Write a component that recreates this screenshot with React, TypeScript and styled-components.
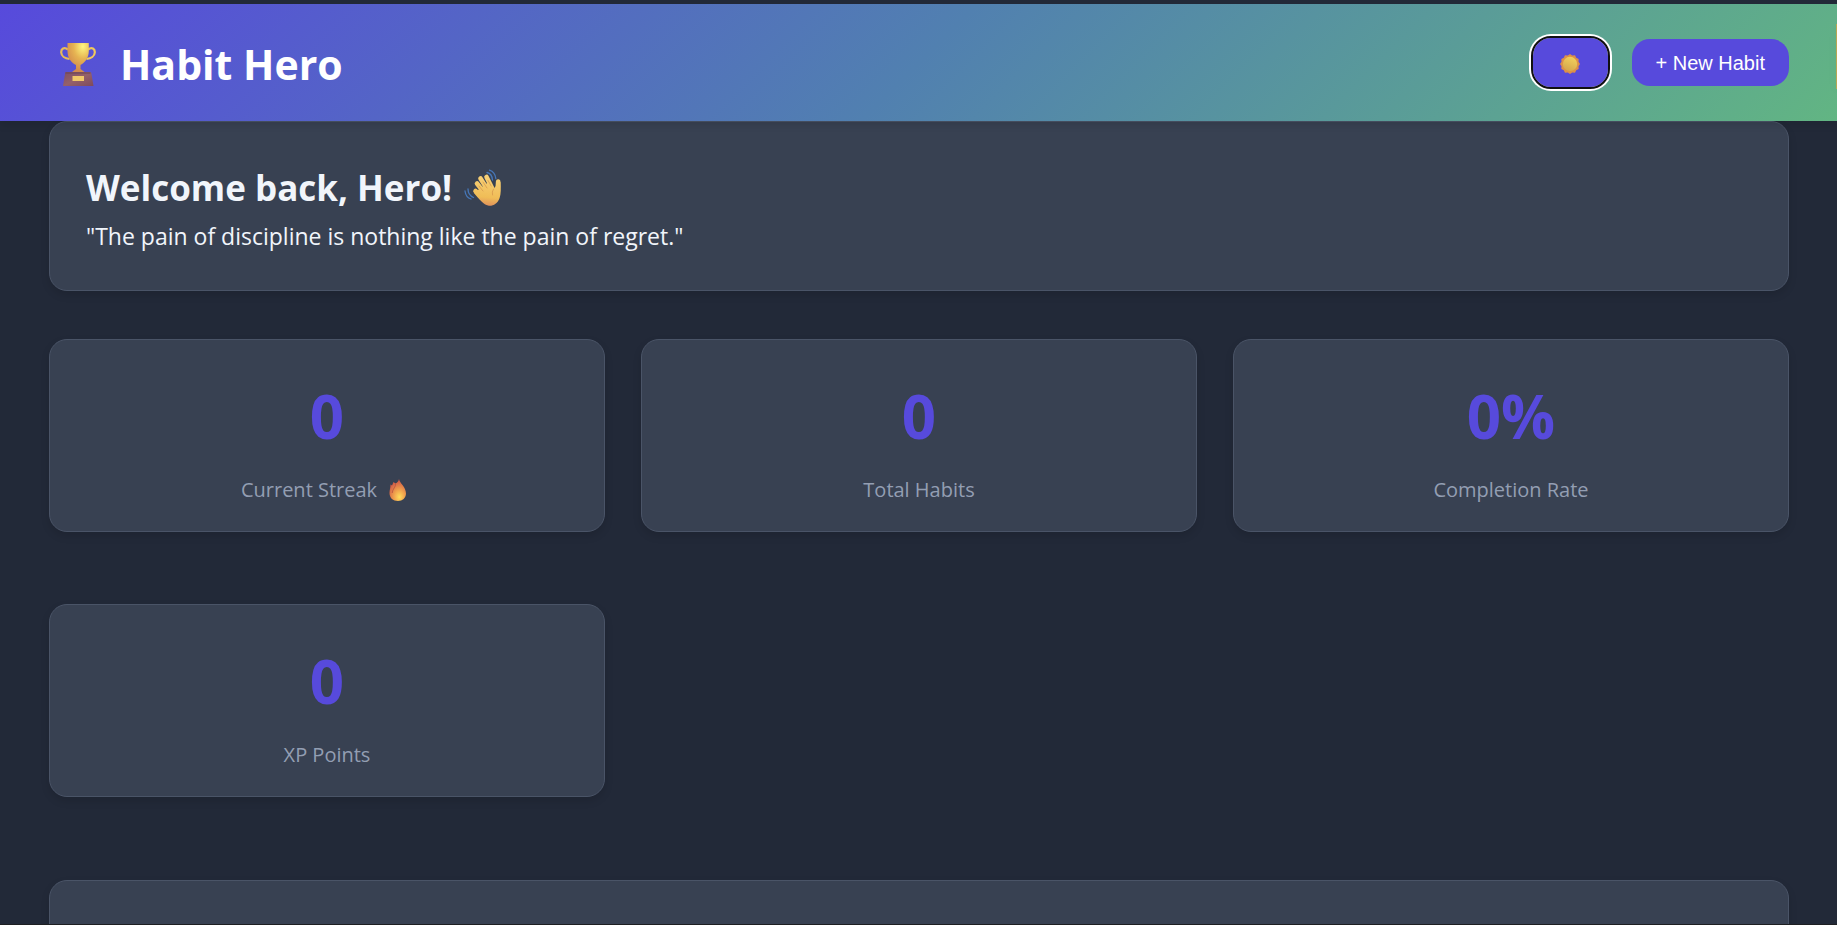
import React, { useState } from "react";
import styled, { createGlobalStyle } from "styled-components";

const GlobalStyle = createGlobalStyle`
  *, *::before, *::after { box-sizing: border-box; }
  html { background: #222938; }
  body {
    margin: 0;
    height: 100vh;
    overflow: hidden;
    background: #222938;
    color: #f1f5fb;
    font-family: "Segoe UI", "Open Sans", "Noto Sans", sans-serif;
  }
  h1, h2, p, dl, dt, dd { margin: 0; }
`;

const Page = styled.div`
  height: 100vh;
  overflow: hidden;
  border-top: 4px solid #222938;
  border-bottom: 1px solid #1e1f22;
`;

const Header = styled.header`
  position: relative;
  z-index: 1;
  background: linear-gradient(135deg, #574adc 0%, #5180b0 50%, #62b583 100%);
  box-shadow: 0 4px 8px rgba(0, 0, 0, 0.1);
`;

const Container = styled.div`
  padding: 0 48px 0 49px;
`;

const HeaderRow = styled(Container)`
  display: flex;
  align-items: center;
  justify-content: space-between;
  height: 117px;
`;

const Brand = styled.h1`
  display: flex;
  align-items: center;
  gap: 24px;
  padding: 3px 0 0 11px;
  color: #fff;
  font-size: 41px;
  line-height: 60px;
  font-weight: 700;
`;

const Actions = styled.div`
  display: flex;
  align-items: center;
  gap: 24px;
`;

const Button = styled.button`
  display: inline-flex;
  align-items: center;
  justify-content: center;
  height: 47px;
  padding: 0 24px;
  border: 0;
  border-radius: 18px;
  background: #574adc;
  color: #fff;
  font: 20px/24px "Liberation Sans", Arial, sans-serif;
  cursor: pointer;
`;

const ThemeButton = styled(Button)`
  width: 75px;
  height: 49px;
  padding-top: 3px;
  outline: 2px solid #101012;
  box-shadow: 0 0 0 4px #fff;
`;

const Card = styled.section`
  border: 1px solid #4a5467;
  border-radius: 18px;
  background: #384152;
  box-shadow: 0 4px 8px rgba(0, 0, 0, 0.12);
`;

const Welcome = styled(Card)`
  height: 170px;
  padding: 41px 36px 0;
`;

const WelcomeTitle = styled.h2`
  display: flex;
  align-items: center;
  gap: 12px;
  font-size: 35px;
  line-height: 50px;
  font-weight: 700;
`;

const Quote = styled.p`
  margin-top: 5px;
  font-size: 23px;
  line-height: 36px;
`;

const Stats = styled.dl`
  display: grid;
  grid-template-columns: repeat(3, 1fr);
  gap: 72px 36px;
  margin: 48px 0 83px;
`;

const StatCard = styled(Card).attrs({ as: "div" })`
  display: flex;
  flex-direction: column-reverse;
  justify-content: flex-end;
  align-items: center;
  height: 193px;
  padding-top: 35px;
`;

const StatValue = styled.dd`
  color: #574adc;
  font-size: 60px;
  line-height: 82px;
  font-weight: 700;
`;

const StatLabel = styled.dt`
  display: flex;
  align-items: center;
  gap: 12px;
  margin-top: 16px;
  color: #939eb2;
  font-size: 20px;
  line-height: 34px;
`;

const FireSlot = styled.span`
  display: flex;
  padding-right: 6px;
`;

const Panel = styled(Card)`
  height: 240px;
`;

const Toast = styled.div`
  position: absolute;
  z-index: 2;
  top: 20px;
  right: 0;
  width: 1px;
  height: 65px;
  background: #b9a653;
  box-shadow: 0 4px 12px rgba(0, 0, 0, 0.1);
`;

const Trophy = () => (
  <svg width="36" height="44" viewBox="0 0 36 44" aria-hidden="true">
    <defs>
      <radialGradient id="cup" cx="0.72" cy="0.12" r="0.85">
        <stop offset="0" stopColor="#fff780" />
        <stop offset="0.5" stopColor="#e6b452" />
        <stop offset="1" stopColor="#d28a4d" />
      </radialGradient>
      <linearGradient id="base" x1="0" y1="0" x2="1" y2="1">
        <stop offset="0" stopColor="#7d5062" />
        <stop offset="0.5" stopColor="#94606a" />
        <stop offset="1" stopColor="#7d4a5c" />
      </linearGradient>
    </defs>
    <path d="M8 7.500C4 4.500 1 7 1.200 10.500C1.400 14 5 16.500 9.500 17" fill="none" stroke="#e8bb58" strokeWidth="2.200" />
    <path d="M28 7.500C32 4.500 35 7 34.800 10.500C34.600 14 31 16.500 26.500 17" fill="none" stroke="#f1c95c" strokeWidth="2.200" />
    <path d="M7.500 1H28.800V9C28.800 16 25 20.500 20.500 23V27L24.500 30H12L16 27V23C11 20.500 7.500 16 7.500 9Z" fill="url(#cup)" />
    <path d="M6 30H30Q31 30 31.300 31L33.500 44H3L5.200 31Q5.400 30 6 30Z" fill="url(#base)" />
    <path d="M5.500 31H30.500" stroke="#6c4454" strokeWidth="1" />
    <rect x="12.500" y="34" width="11.500" height="5" fill="#f0c969" />
  </svg>
);

const Wave = () => (
  <svg width="38" height="38" viewBox="0 0 38 38" aria-hidden="true">
    <defs>
      <linearGradient id="palm" gradientUnits="userSpaceOnUse" x1="24" y1="5" x2="21" y2="38">
        <stop offset="0" stopColor="#f8d27a" />
        <stop offset="0.7" stopColor="#f0bd57" />
        <stop offset="1" stopColor="#dd8a5c" />
      </linearGradient>
    </defs>
    <g fill="none" stroke="#4677b8" strokeWidth="1.300" strokeLinecap="round">
      <path d="M23 3.500Q28 4.500 28.500 11" />
      <path d="M25.500 1.200Q31 3 31.800 9.500" />
      <path d="M4 20Q4 26 9.500 28.500" />
      <path d="M1 22Q1.800 28.500 7 30" />
    </g>
    <g fill="none" stroke="url(#palm)" strokeWidth="4.600" strokeLinecap="round">
      <path d="M11.500 22L19 29" />
      <path d="M13 14.500L22 26" />
      <path d="M16.500 9.500L25 23" />
      <path d="M22.500 8L29 21" />
      <path d="M34.200 12.500L33.500 22" />
    </g>
    <path d="M14 21L24 13.500L30.500 19L33 15.500L36.500 13C37 19 37 25 35.600 29C33.500 35 28.500 37.500 24 36.600C20 35.800 15.500 31 10 24Z" fill="url(#palm)" />
    <path d="M15 17L19 22M19 13L23 19M24 11.500L27.200 17M29.500 20Q27.500 23 28.500 26" fill="none" stroke="#d4934a" strokeWidth="0.700" strokeLinecap="round" />
  </svg>
);

const Fire = () => (
  <svg width="18" height="22" viewBox="0 0 18 22" aria-hidden="true">
    <defs>
      <radialGradient id="flame" cx="0.6" cy="0.82" r="0.75">
        <stop offset="0" stopColor="#ffdc5c" />
        <stop offset="0.45" stopColor="#f0a04c" />
        <stop offset="1" stopColor="#cf5848" />
      </radialGradient>
    </defs>
    <path d="M10 0C10.500 4 17 8 17 14.500C17 19 13.500 22 9 22C4 22 0.500 19 0.500 14C0.500 10.500 1.500 9.500 1.500 5.500L3 6.500L4.500 3L6.500 4.500C8.500 3.500 9.500 2 10 0Z" fill="url(#flame)" />
    <path d="M6.500 5C7 8 3.500 9.500 3.200 14" fill="none" stroke="#b9523f" strokeWidth="0.800" />
  </svg>
);

const sunRays = Array.from({ length: 24 }, (_, i) => {
  const r = i % 2 ? 8.8 : 10;
  const a = (i * Math.PI) / 12;
  return `${(10 + r * Math.sin(a)).toFixed(2)},${(10 - r * Math.cos(a)).toFixed(2)}`;
}).join(" ");

const Sun = () => (
  <svg width="20" height="20" viewBox="0 0 20 20" aria-hidden="true">
    <defs>
      <linearGradient id="sun" x1="0.7" y1="0" x2="0.3" y2="1">
        <stop offset="0" stopColor="#f3d15c" />
        <stop offset="1" stopColor="#d3a54c" />
      </linearGradient>
    </defs>
    <polygon points={sunRays} fill="#dd9048" />
    <circle cx="10" cy="10" r="7.200" fill="url(#sun)" />
  </svg>
);

const stats = [
  { value: "0", label: "Current Streak", icon: <FireSlot><Fire /></FireSlot> },
  { value: "0", label: "Total Habits" },
  { value: "0%", label: "Completion Rate" },
  { value: "0", label: "XP Points" },
];

export default function App() {
  const [light, setLight] = useState(false);
  return (
    <>
      <GlobalStyle />
      <Page>
        <Header>
          <HeaderRow>
            <Brand>
              <Trophy />
              Habit Hero
            </Brand>
            <Actions>
              <ThemeButton type="button" aria-label="Toggle theme" aria-pressed={light} onClick={() => setLight(!light)}>
                <Sun />
              </ThemeButton>
              <Button type="button">+ New Habit</Button>
            </Actions>
          </HeaderRow>
          <Toast />
        </Header>
        <Container as="main">
          <Welcome>
            <WelcomeTitle>
              Welcome back, Hero!
              <Wave />
            </WelcomeTitle>
            <Quote>"The pain of discipline is nothing like the pain of regret."</Quote>
          </Welcome>
          <Stats>
            {stats.map((s) => (
              <StatCard key={s.label}>
                <StatLabel>
                  {s.label}
                  {s.icon}
                </StatLabel>
                <StatValue>{s.value}</StatValue>
              </StatCard>
            ))}
          </Stats>
          <Panel aria-label="Habits" />
        </Container>
      </Page>
    </>
  );
}
